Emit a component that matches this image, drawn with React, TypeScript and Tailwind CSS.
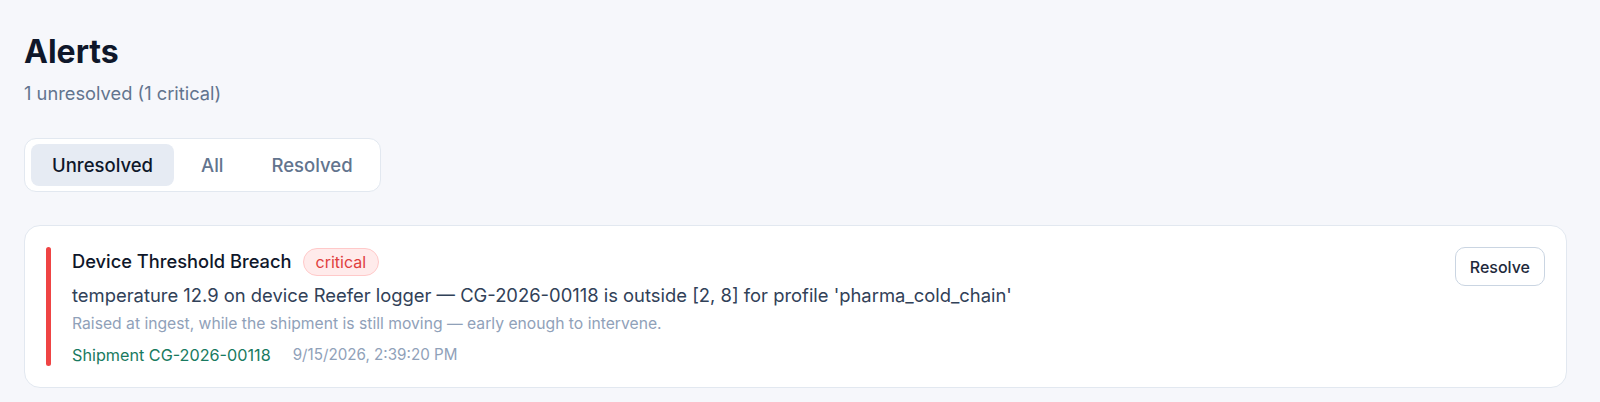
import React, { useState } from "react";

type Tab = "Unresolved" | "All" | "Resolved";

const TABS: Tab[] = ["Unresolved", "All", "Resolved"];

const App: React.FC = () => {
	const [tab, setTab] = useState<Tab>("Unresolved");

	return (
		<div className="min-h-screen bg-[#f6f7fb] pl-6 pr-[33px] pt-8 pb-6 font-['Inter',sans-serif] antialiased">
			{/* Header */}
			<h1 className="text-[32px] leading-[40px] font-bold text-[#0f172a]">
				Alerts
			</h1>
			<p className="mt-2 text-[18.3px] leading-[26px] text-slate-500">
				1 unresolved (1 critical)
			</p>

			{/* Filter tabs */}
			<div className="mt-8 inline-flex gap-[6px] rounded-xl border border-slate-200 bg-white px-[6px] py-[5px]">
				{TABS.map((t) => (
					<button
						key={t}
						type="button"
						onClick={() => setTab(t)}
						className={
							t === tab
								? "rounded-lg bg-[#e6ebf3] px-[21px] py-[7px] text-[18.5px] leading-[28px] font-medium text-[#0f172a]"
								: "rounded-lg px-[21px] py-[7px] text-[18.5px] leading-[28px] font-medium text-slate-500"
						}>
						{t}
					</button>
				))}
			</div>

			{/* Alert card */}
			<div className="mt-[33px] flex gap-[21px] rounded-2xl border border-slate-200 bg-white p-[21px]">
				<div className="w-[5px] shrink-0 rounded-full bg-[#ef4444]" />
				<div className="flex-1">
					<div className="flex h-[30px] items-center gap-[11px]">
						<span className="text-[18.3px] font-medium text-[#0f172a]">
							Device Threshold Breach
						</span>
						<span className="rounded-full border border-red-200 bg-red-100/70 px-3 text-[16px] leading-[26px] text-[#e03e3e]">
							critical
						</span>
					</div>
					<p className="mt-[5px] text-[18.4px] leading-[26px] text-slate-700">
						temperature 12.9 on device Reefer logger — CG-2026-00118 is outside
						[2, 8] for profile 'pharma_cold_chain'
					</p>
					<p className="mt-[5px] text-[15.7px] leading-[22px] text-slate-400">
						Raised at ingest, while the shipment is still moving — early enough
						to intervene.
					</p>
					<div className="mt-[9px] flex gap-[22px] leading-[22px]">
						<span className="text-[16.2px] text-[#187a60]">
							Shipment CG-2026-00118
						</span>
						<span className="text-[15.2px] text-slate-400">
							9/15/2026, 2:39:20 PM
						</span>
					</div>
				</div>
				<div>
					<button
						type="button"
						className="h-[39px] rounded-[10px] border border-slate-300 bg-white px-[14px] text-[16px] font-medium text-[#1e293b]">
						Resolve
					</button>
				</div>
			</div>
		</div>
	);
};

export default App;
